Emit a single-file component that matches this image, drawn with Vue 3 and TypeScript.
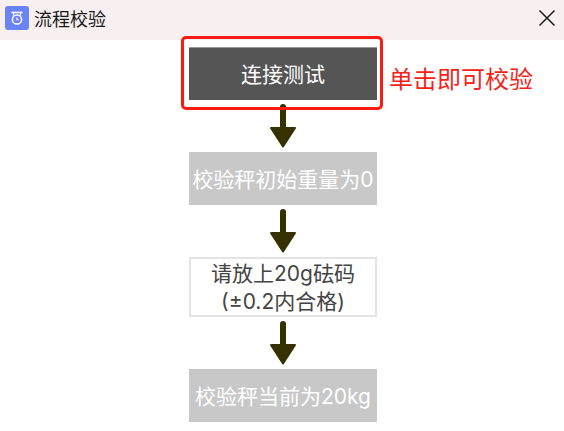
<script setup lang="ts">
const title = '流程校验'
</script>

<template>
  <div class="dialog">
    <header class="head">
      <span class="logo">
        <svg width="24" height="24" viewBox="0 0 24 24">
          <rect width="24" height="24" rx="3" fill="#6a83f5" />
          <path d="M6.5 6.5h11" stroke="#fff" stroke-width="1.6" fill="none" />
          <path d="M8.5 6.5v3" stroke="#fff" stroke-width="1.2" fill="none" />
          <path d="M15.5 6.5v3" stroke="#fff" stroke-width="1.2" fill="none" />
          <circle cx="12" cy="13.5" r="4.6" stroke="#fff" stroke-width="1.5" fill="none" />
          <path d="M12 11.5v2.2h1.6" stroke="#fff" stroke-width="1.2" fill="none" />
        </svg>
      </span>
      <span class="title">{{ title }}</span>
      <svg class="close" width="18" height="18" viewBox="0 0 18 18">
        <path d="M1.500 1.500l15 15M16.500 1.500l-15 15" stroke="#1c1c1c" stroke-width="1.5" fill="none" />
      </svg>
    </header>

    <main class="flow">
      <div class="first">
        <div class="step dark">连接测试</div>
        <div class="highlight"></div>
        <span class="hint">单击即可校验</span>
      </div>
      <svg class="arrow" width="40" height="46" viewBox="0 0 40 46">
        <path d="M20 4v24" stroke="#353100" stroke-width="6" stroke-linecap="round" />
        <path d="M8 25h24L20 43.5z" fill="#353100" stroke="#353100" stroke-width="2" stroke-linejoin="round" />
      </svg>
      <div class="step muted">校验秤初始重量为0</div>
      <svg class="arrow" width="40" height="46" viewBox="0 0 40 46">
        <path d="M20 4v24" stroke="#353100" stroke-width="6" stroke-linecap="round" />
        <path d="M8 25h24L20 43.5z" fill="#353100" stroke="#353100" stroke-width="2" stroke-linejoin="round" />
      </svg>
      <div class="step outline">请放上20g砝码<br />(±0.2内合格)</div>
      <svg class="arrow" width="40" height="46" viewBox="0 0 40 46">
        <path d="M20 4v24" stroke="#353100" stroke-width="6" stroke-linecap="round" />
        <path d="M8 25h24L20 43.5z" fill="#353100" stroke="#353100" stroke-width="2" stroke-linejoin="round" />
      </svg>
      <div class="step muted">校验秤当前为20kg</div>
    </main>
  </div>
</template>

<style scoped>
.dialog {
  width: 564px;
  height: 431px;
  overflow: hidden;
  background: #fff;
  font-family: Inter, "Noto Sans CJK SC", sans-serif;
}

.head {
  height: 40px;
  box-sizing: border-box;
  display: flex;
  align-items: center;
  padding: 0 8px 5px 5px;
  background: #f8f0f0;
}

.logo {
  width: 24px;
  height: 24px;
  display: block;
}

.logo svg {
  display: block;
}

.title {
  margin-left: 5px;
  font-size: 18px;
  color: #1a1a1a;
}

.close {
  margin-left: auto;
}

.flow {
  width: 188px;
  margin-left: 189px;
  padding-top: 7px;
  display: flex;
  flex-direction: column;
  align-items: center;
}

.first {
  position: relative;
  width: 100%;
}

.step {
  width: 100%;
  box-sizing: border-box;
  display: flex;
  align-items: center;
  justify-content: center;
  text-align: center;
  font-size: 21px;
}

.dark {
  height: 53px;
  padding-bottom: 2px;
  background: #555;
  border-top: 1px solid #999;
  color: #fff;
}

.muted {
  height: 53px;
  padding-bottom: 2px;
  background: #c8c8c8;
  color: #fff;
}

.outline {
  height: 60px;
  padding-top: 2px;
  border: 2px solid #e4e4e4;
  color: #444;
  line-height: 28px;
}

.arrow {
  display: block;
  margin: 3px 0;
}

.highlight {
  position: absolute;
  left: -8px;
  top: -11px;
  width: 202px;
  height: 74px;
  box-sizing: border-box;
  border: 3.5px solid #fb1b10;
  border-radius: 5px;
}

.hint {
  position: absolute;
  left: 200px;
  top: 18px;
  font-size: 24px;
  line-height: 30px;
  white-space: nowrap;
  color: #f4231a;
}
</style>
